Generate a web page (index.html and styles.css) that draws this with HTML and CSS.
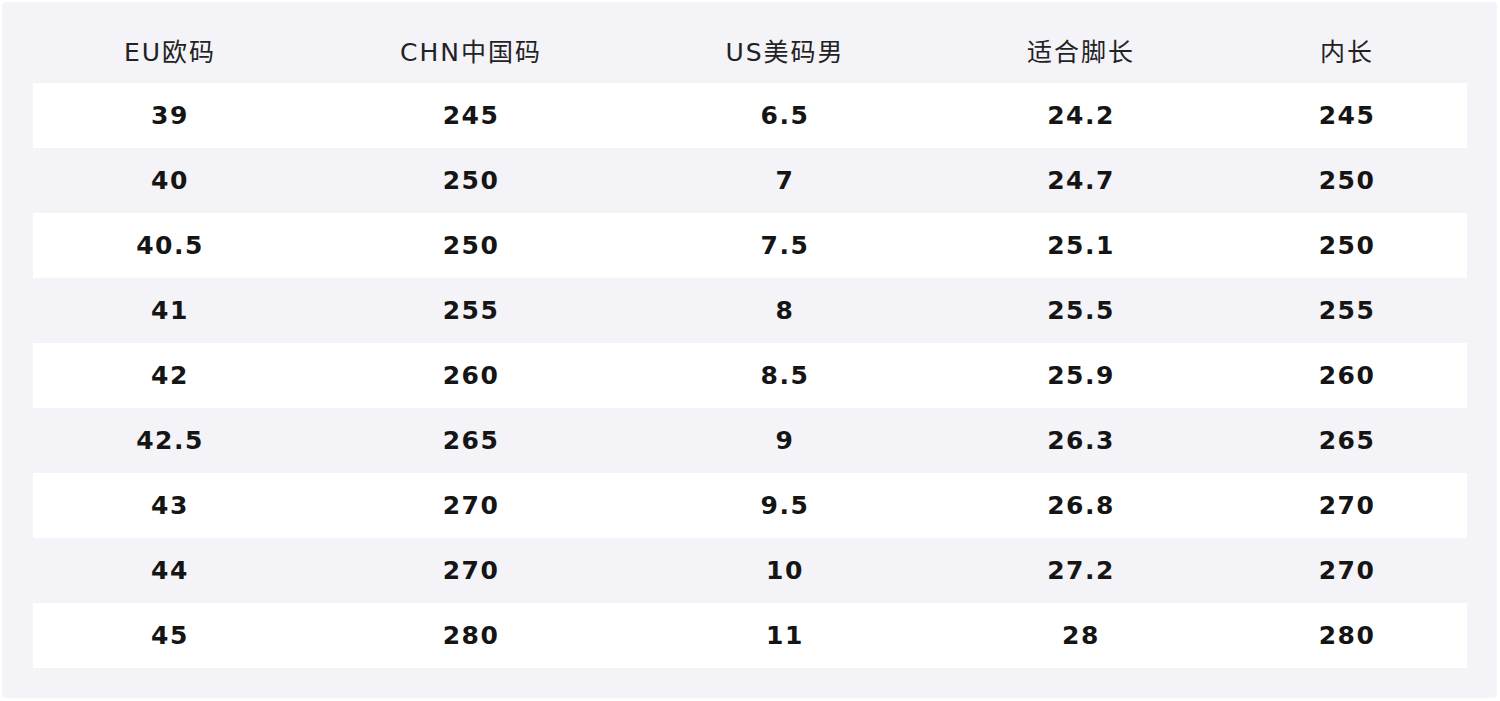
FILE: index.html
```html
<!DOCTYPE html>
<html lang="zh">
<head>
<meta charset="utf-8">
<title>尺码表</title>
<link rel="stylesheet" href="styles.css">
</head>
<body>
<div class="panel">
  <div class="size-table">
    <div class="row head">
      <div class="cell">EU欧码</div><div class="cell">CHN中国码</div><div class="cell">US美码男</div><div class="cell">适合脚长</div><div class="cell">内长</div>
    </div>
    <div class="row odd"><div class="cell">39</div><div class="cell">245</div><div class="cell">6.5</div><div class="cell">24.2</div><div class="cell">245</div></div>
    <div class="row"><div class="cell">40</div><div class="cell">250</div><div class="cell">7</div><div class="cell">24.7</div><div class="cell">250</div></div>
    <div class="row odd"><div class="cell">40.5</div><div class="cell">250</div><div class="cell">7.5</div><div class="cell">25.1</div><div class="cell">250</div></div>
    <div class="row"><div class="cell">41</div><div class="cell">255</div><div class="cell">8</div><div class="cell">25.5</div><div class="cell">255</div></div>
    <div class="row odd"><div class="cell">42</div><div class="cell">260</div><div class="cell">8.5</div><div class="cell">25.9</div><div class="cell">260</div></div>
    <div class="row"><div class="cell">42.5</div><div class="cell">265</div><div class="cell">9</div><div class="cell">26.3</div><div class="cell">265</div></div>
    <div class="row odd"><div class="cell">43</div><div class="cell">270</div><div class="cell">9.5</div><div class="cell">26.8</div><div class="cell">270</div></div>
    <div class="row"><div class="cell">44</div><div class="cell">270</div><div class="cell">10</div><div class="cell">27.2</div><div class="cell">270</div></div>
    <div class="row odd"><div class="cell">45</div><div class="cell">280</div><div class="cell">11</div><div class="cell">28</div><div class="cell">280</div></div>
  </div>
</div>
</body>
</html>
```
FILE: styles.css
```css
html, body {
  margin: 0;
  padding: 0;
  background: #ffffff;
}
body {
  padding: 2px 3px 3px 2px;
  font-family: "DejaVu Sans", "Noto Sans CJK SC", sans-serif;
  color: #151515;
}
.panel {
  background: #f3f3f8;
  border-radius: 4px;
  height: 696px;
  box-sizing: border-box;
  padding: 15px 30px 0 31px;
}
.size-table {
  display: flex;
  flex-direction: column;
}
.row {
  display: grid;
  grid-template-columns: 274px 328px 300px 292px 240px;
  height: 65px;
  align-items: center;
}
.head {
  height: 66px;
}
.row.odd {
  background: #ffffff;
}
.cell {
  text-align: center;
  font-size: 25px;
  font-weight: bold;
  letter-spacing: 1.5px;
}
.head .cell {
  font-weight: normal;
  font-size: 25px;
  letter-spacing: 2px;
  color: #222222;
}
```
